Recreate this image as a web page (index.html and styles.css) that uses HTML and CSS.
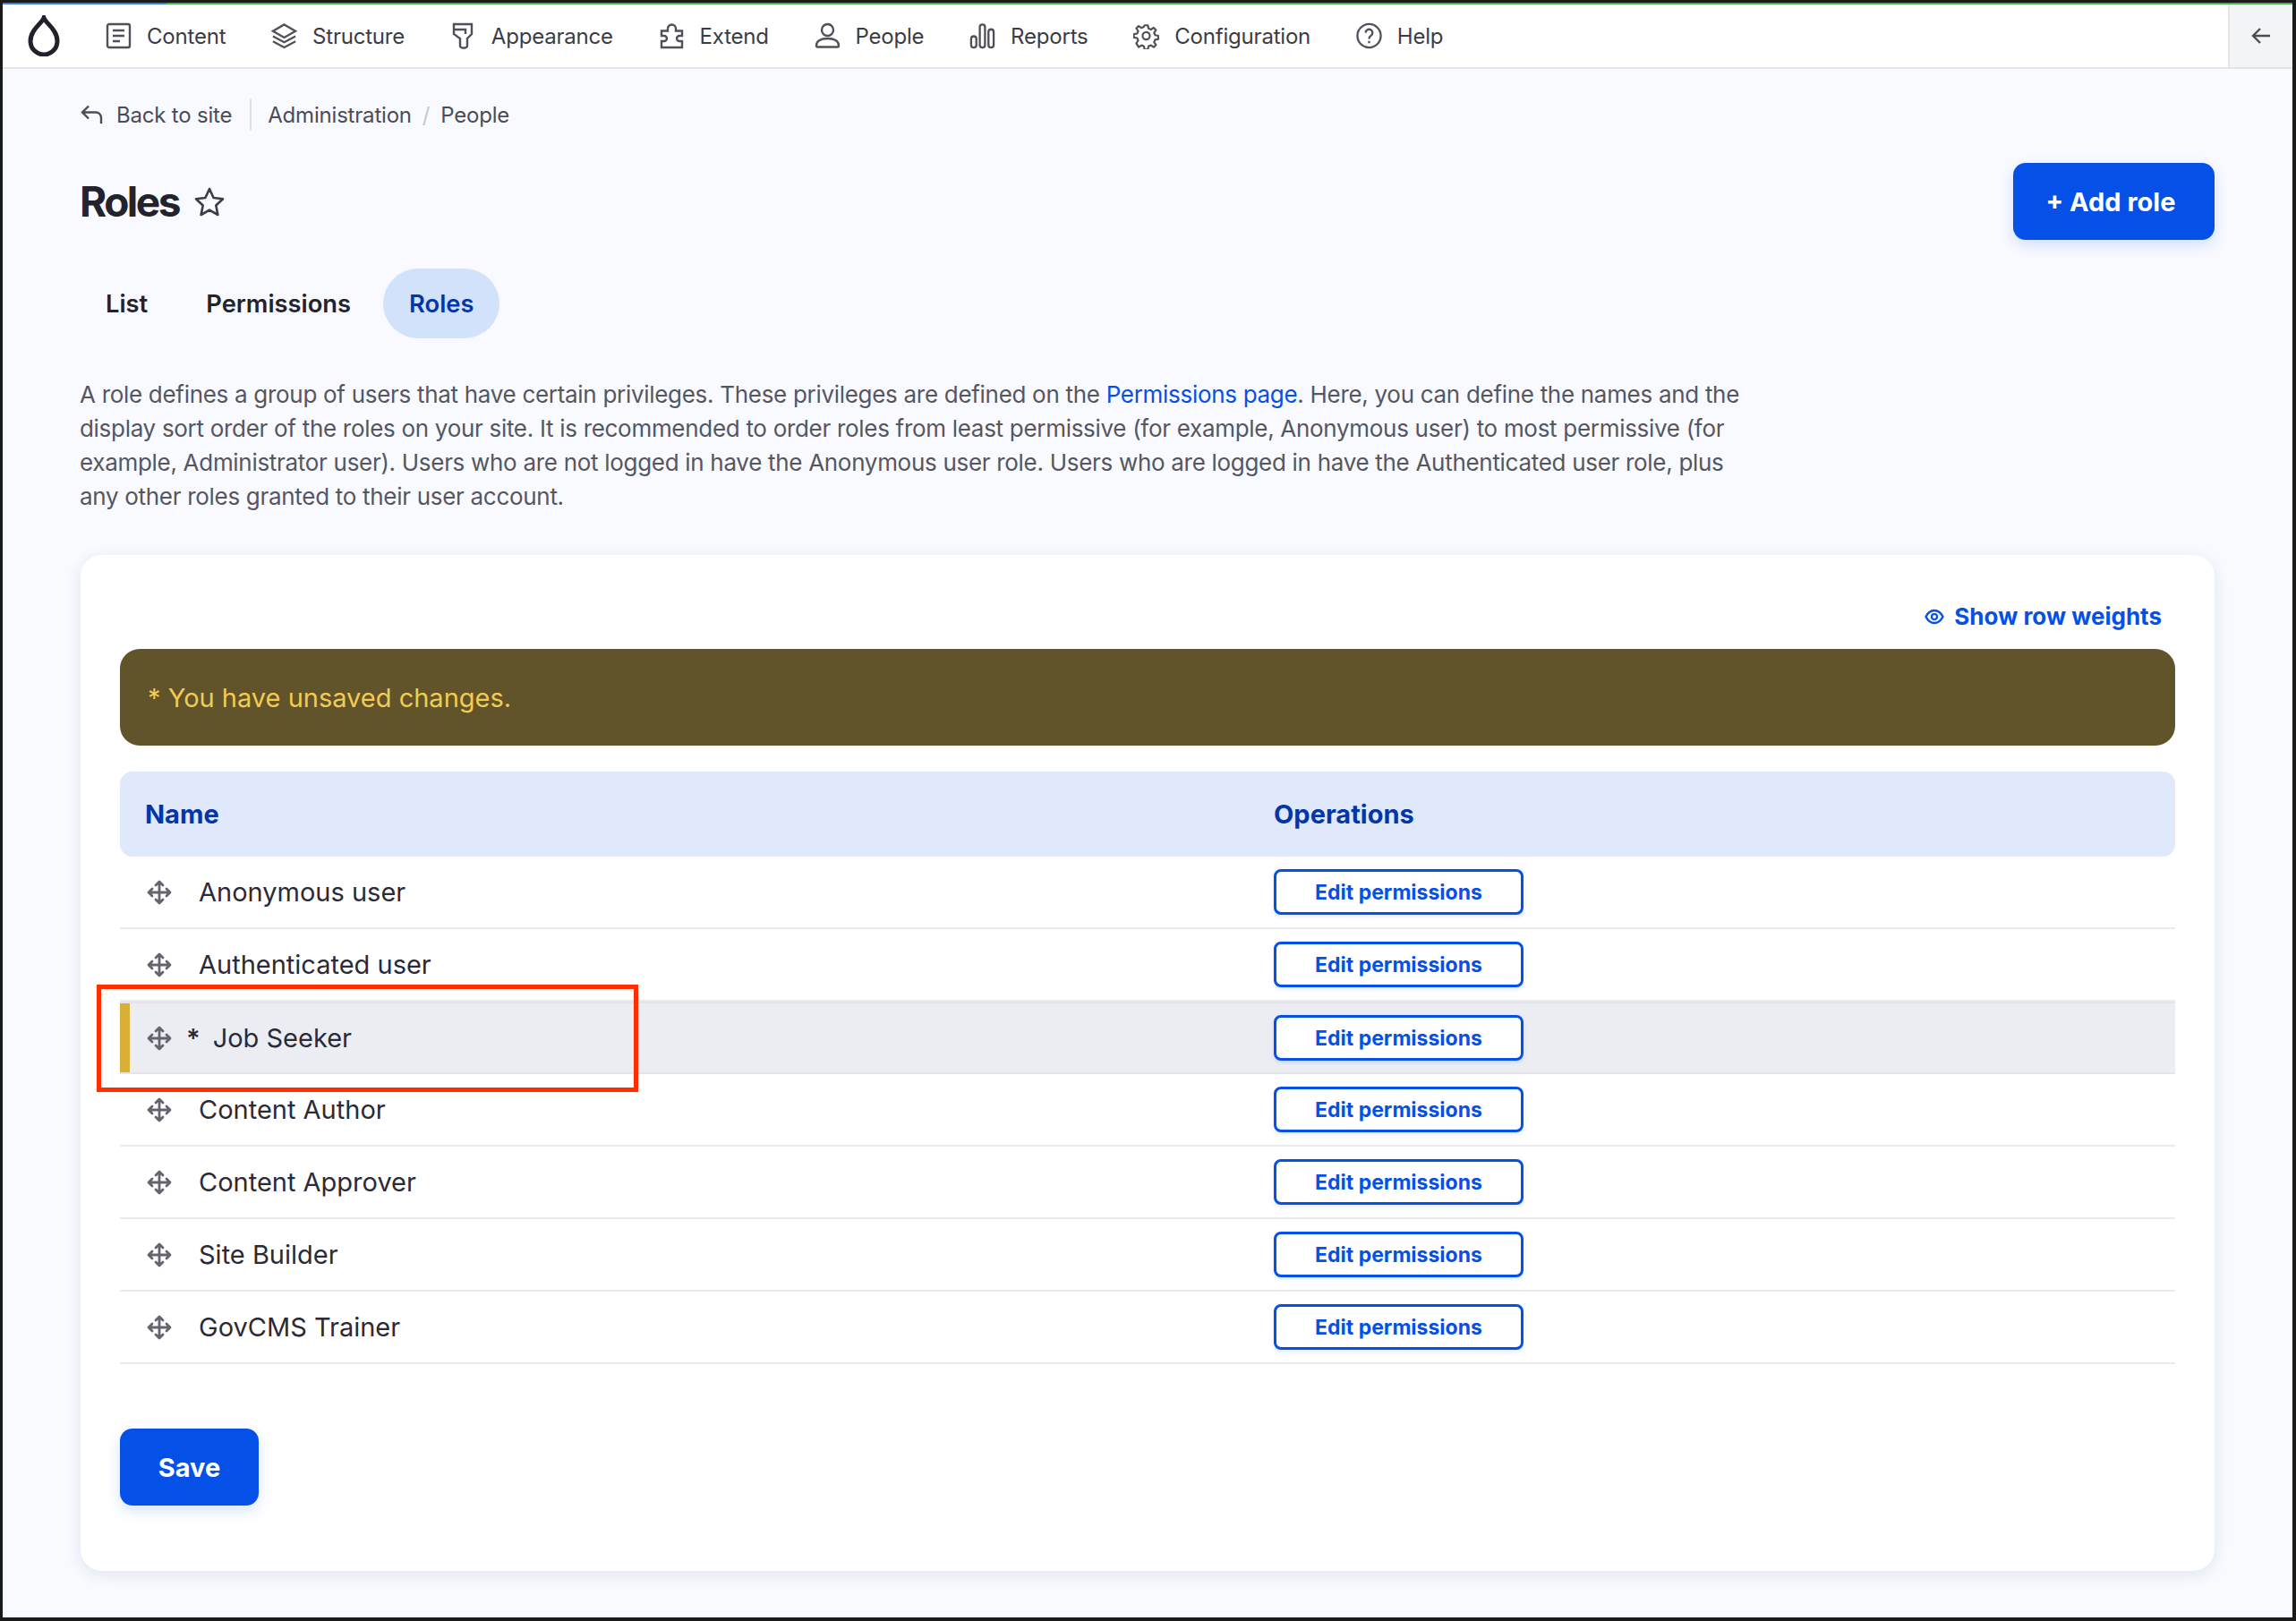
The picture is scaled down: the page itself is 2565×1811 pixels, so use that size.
FILE: index.html
```html
<!DOCTYPE html>
<html lang="en">
<head>
    <meta charset="UTF-8">
    <title>Roles</title>
    <link rel="stylesheet" href="styles.css">
</head>
<body>
    <svg class="sprite" width="0" height="0">
        <symbol id="drag" viewBox="0 0 28 28">
            <path d="M14 3v22M3 14h22M10 6l4-4 4 4M10 22l4 4 4-4M6 10l-4 4 4 4M22 10l4 4-4 4" fill="none" stroke="#63646e" stroke-width="2.800" stroke-linecap="round" stroke-linejoin="round"/>
        </symbol>
    </svg>

    <div class="window">
        <nav class="toolbar">
            <a class="logo" href="#">
                <svg width="36" height="46" viewBox="0 0 36 46"><path d="M18 3c2 6 15 13 15 26a15 15 0 0 1-30 0C3 16 16 9 18 3z" fill="none" stroke="#20212b" stroke-width="5"/></svg>
            </a>
            <ul class="toolbar-menu">
                <li><svg viewBox="0 0 29 29"><rect x="2" y="1.500" width="25" height="26" rx="2"/><path d="M8 8.500h13M8 14.500h13M8 20.500h8"/></svg>Content</li>
                <li><svg viewBox="0 0 30 30"><path d="M15 2 28 9.500 15 17 2 9.500zM2 15.500l13 7 13-7M2 21.500l13 7 13-7"/></svg>Structure</li>
                <li><svg viewBox="0 0 29 30"><path d="M4 2h20v11l-5 5v8a2.500 2.500 0 0 1-2.500 2.500h-3A2.500 2.500 0 0 1 11 26v-8l-7-5zM4 8h13v5"/></svg>Appearance</li>
                <li><svg viewBox="0 0 29 29"><path d="M10 9V6.500a4.500 4.500 0 0 1 9 0V9h7v5.500h-3a3 3 0 0 0 0 6h3v7H3v-7h3a3 3 0 0 0 0-6H3V9z"/></svg>Extend</li>
                <li><svg viewBox="0 0 29 29"><circle cx="14.500" cy="8" r="6.500"/><path d="M2 25.500c0-5 5-8 12.500-8s12.500 3 12.500 8a1.500 1.500 0 0 1-1.500 1.500h-22A1.500 1.500 0 0 1 2 25.500z"/></svg>People</li>
                <li><svg viewBox="0 0 30 29"><rect x="2" y="15" width="6" height="13" rx="3"/><rect x="12" y="1.500" width="6" height="26.500" rx="3"/><rect x="22" y="7" width="6" height="21" rx="3"/></svg>Reports</li>
                <li><svg viewBox="-1 -1 32 32"><circle cx="15" cy="15" r="4.500"/><path class="gear" d="M13 2h4l.8 4 3 1.300 3.400-2.300 2.800 2.800-2.300 3.400 1.300 3 4 .8v4l-4 .8-1.300 3 2.300 3.400-2.800 2.800-3.400-2.300-3 1.300-.8 4h-4l-.8-4-3-1.300-3.400 2.300L2.800 24.200l2.300-3.400-1.300-3-4-.8v-4l4-.8 1.300-3L2.800 5.800 5.600 3l3.400 2.300 3-1.300z"/></svg>Configuration</li>
                <li><svg viewBox="0 0 30 30"><circle cx="15" cy="15" r="13.500"/><path d="M11 11.500a4 4 0 1 1 6 3.500c-1.500.9-2 1.700-2 3.500M15 21v2.500"/></svg>Help</li>
            </ul>
            <button class="toolbar-toggle" type="button">
                <svg width="22" height="20" viewBox="0 0 22 20"><path d="M21 10H2M10 2l-8 8 8 8" fill="none" stroke="#4b4c55" stroke-width="2.400"/></svg>
            </button>
        </nav>

        <main class="page">
            <div class="breadcrumb">
                <a class="back-link" href="#">
                    <svg width="25" height="22" viewBox="0 0 25 22"><path d="M9 1.500 2 8.500l7 7M2 8.500h15a6 6 0 0 1 6 6V21" fill="none" stroke="#4b4c55" stroke-width="2.400"/></svg>
                    Back to site
                </a>
                <span class="crumb">Administration</span>
                <span class="crumb-sep">/</span>
                <span class="crumb">People</span>
            </div>

            <header class="page-head">
                <div class="title">
                    <h1>Roles</h1>
                    <svg width="34" height="33" viewBox="0 0 34 33"><path d="m17 2 4.600 10 10.400 1.200-7.700 7.300 2.100 10.500L17 25.600 7.600 31l2.100-10.500L2 13.200 12.400 12z" fill="none" stroke="#3c3d47" stroke-width="2.600" stroke-linejoin="round"/></svg>
                </div>
                <a class="btn btn-primary btn-add" href="#">+ Add role</a>
            </header>

            <ul class="tabs">
                <li>List</li>
                <li>Permissions</li>
                <li class="active">Roles</li>
            </ul>

            <p class="intro">A role defines a group of users that have certain privileges. These privileges are defined on the <a href="#">Permissions page</a>. Here, you can define the names and the display sort order of the roles on your site. It is recommended to order roles from least permissive (for example, Anonymous user) to most permissive (for example, Administrator user). Users who are not logged in have the Anonymous user role. Users who are logged in have the Authenticated user role, plus any other roles granted to their user account.</p>

            <section class="card">
                <div class="weights">
                    <a href="#">
                        <svg width="22" height="20" viewBox="0 0 22 20"><path d="M1.500 10C4 5 7 3 11 3s7 2 9.500 7C18 15 15 17 11 17s-7-2-9.500-7z" fill="none" stroke="#0550e6" stroke-width="2.400"/><circle cx="11" cy="10" r="3" fill="none" stroke="#0550e6" stroke-width="2.200"/></svg>
                        Show row weights
                    </a>
                </div>

                <div class="warning">* You have unsaved changes.</div>

                <table class="roles">
                    <thead>
                        <tr><th class="col-name">Name</th><th>Operations</th></tr>
                    </thead>
                    <tbody>
                        <tr>
                            <td><div class="role"><svg class="handle"><use href="#drag"/></svg>Anonymous user</div></td>
                            <td><a class="btn-edit" href="#">Edit permissions</a></td>
                        </tr>
                        <tr>
                            <td><div class="role"><svg class="handle"><use href="#drag"/></svg>Authenticated user</div></td>
                            <td><a class="btn-edit" href="#">Edit permissions</a></td>
                        </tr>
                        <tr class="changed">
                            <td>
                                <div class="role"><svg class="handle"><use href="#drag"/></svg><span class="star">*</span>Job Seeker</div>
                                <div class="highlight"></div>
                            </td>
                            <td><a class="btn-edit" href="#">Edit permissions</a></td>
                        </tr>
                        <tr>
                            <td><div class="role"><svg class="handle"><use href="#drag"/></svg>Content Author</div></td>
                            <td><a class="btn-edit" href="#">Edit permissions</a></td>
                        </tr>
                        <tr>
                            <td><div class="role"><svg class="handle"><use href="#drag"/></svg>Content Approver</div></td>
                            <td><a class="btn-edit" href="#">Edit permissions</a></td>
                        </tr>
                        <tr>
                            <td><div class="role"><svg class="handle"><use href="#drag"/></svg>Site Builder</div></td>
                            <td><a class="btn-edit" href="#">Edit permissions</a></td>
                        </tr>
                        <tr>
                            <td><div class="role"><svg class="handle"><use href="#drag"/></svg>GovCMS Trainer</div></td>
                            <td><a class="btn-edit" href="#">Edit permissions</a></td>
                        </tr>
                    </tbody>
                </table>

                <a class="btn btn-primary btn-save" href="#">Save</a>
            </section>
        </main>
    </div>
</body>
</html>
```

FILE: styles.css
```css
* {
    box-sizing: border-box;
}

html, body {
    height: 100%;
}

body {
    margin: 0;
    padding: 3px 4px 4px 3px;
    background: #1a1a1a;
    font-family: 'Inter', 'Liberation Sans', sans-serif;
    color: #22232d;
}

a {
    text-decoration: none;
    color: inherit;
}

.sprite {
    position: absolute;
}

.window {
    height: 100%;
    background: #f8faff;
    border-top: 2px solid;
    border-image: linear-gradient(to right, #3f7de0 184px, #4caf50 184px) 1;
    overflow: hidden;
}

/* Toolbar */
.toolbar {
    display: flex;
    align-items: center;
    height: 72px;
    background: #fff;
    border-bottom: 2px solid #e3e4e8;
}

.logo {
    display: flex;
    margin-left: 28px;
    margin-right: 51px;
}

.toolbar-menu {
    display: flex;
    flex: 1;
    align-items: center;
    gap: 50.700px;
    list-style: none;
    margin: 0;
    padding: 0;
    font-size: 24px;
    letter-spacing: -0.2px;
    color: #3b3c46;
}

.toolbar-menu li {
    display: flex;
    align-items: center;
    gap: 17px;
}

.toolbar-menu svg {
    width: 29px;
    height: 30px;
    fill: none;
    stroke: #4f5059;
    stroke-width: 2.400;
}

.toolbar-menu .gear {
    stroke-linejoin: round;
}

.toolbar-toggle {
    display: flex;
    align-items: center;
    justify-content: center;
    width: 72px;
    height: 100%;
    padding: 0;
    background: #f3f4f5;
    border: none;
    border-left: 2px solid #e3e4e8;
}

/* Page */
.page {
    padding: 0 87px;
}

.breadcrumb {
    display: flex;
    align-items: center;
    height: 36px;
    margin-top: 33px;
    font-size: 24px;
    letter-spacing: -0.2px;
    color: #4b4c55;
}

.back-link {
    display: flex;
    align-items: center;
    gap: 15px;
    height: 100%;
    padding-right: 20px;
    margin-right: 18px;
    border-right: 2px solid #dfe0e4;
}

.crumb-sep {
    margin: 0 12px;
    color: #c6c7cd;
}

.page-head {
    display: flex;
    align-items: center;
    justify-content: space-between;
    margin-top: 36px;
}

.title {
    display: flex;
    align-items: center;
    gap: 17px;
    margin-left: -1px;
}

h1 {
    margin: 0;
    font-size: 46px;
    font-weight: 700;
    letter-spacing: -2.500px;
    color: #22232d;
}

.btn {
    display: flex;
    align-items: center;
    justify-content: center;
    border-radius: 14px;
    font-weight: 700;
}

.btn-primary {
    width: 225px;
    height: 86px;
    background: #0550e6;
    color: #fff;
    font-size: 29px;
    box-shadow: 0 6px 16px rgba(5, 80, 230, 0.16);
}

.btn-add {
    padding-right: 7px;
}

.tabs {
    display: flex;
    gap: 7px;
    list-style: none;
    margin: 32px 0 0 -1px;
    padding: 0;
    font-size: 27.300px;
    font-weight: 600;
    color: #22232d;
}

.tabs li {
    display: flex;
    align-items: center;
    height: 78px;
    padding: 0 29px;
    border-radius: 39px;
}

.tabs .active {
    background: #d3e2fb;
    color: #0336a8;
}

.intro {
    width: 1870px;
    margin: 44px 0 0 -1px;
    font-size: 26px;
    line-height: 38px;
    letter-spacing: -0.3px;
    color: #55565f;
}

.intro a {
    color: #0550e6;
}

/* Card */
.card {
    margin-top: 46px;
    height: 1135px;
    padding: 0 44px;
    background: #fff;
    border-radius: 24px;
    box-shadow: 0 4px 18px rgba(34, 35, 90, 0.1);
}

.weights {
    display: flex;
    align-items: center;
    justify-content: flex-end;
    height: 105px;
    padding: 32px 15px 0 0;
    font-size: 26px;
    font-weight: 700;
    color: #0550e6;
}

.weights a {
    display: flex;
    align-items: center;
    gap: 11px;
}

.warning {
    display: flex;
    align-items: center;
    height: 108px;
    padding-left: 31px;
    background: #61532a;
    border-radius: 22px;
    font-size: 29px;
    color: #f2cb53;
}

.roles {
    width: 100%;
    margin-top: 29px;
    border-collapse: separate;
    border-spacing: 0;
}

.roles th {
    height: 95px;
    padding: 0;
    background: #e0e8fb;
    font-size: 29px;
    font-weight: 700;
    text-align: left;
    color: #0336a8;
}

.roles th:first-child {
    border-radius: 14px 0 0 14px;
}

.roles th:last-child {
    border-radius: 0 14px 14px 0;
}

.col-name {
    width: 1289px;
}

.roles th.col-name {
    padding-left: 28px;
}

.roles td {
    position: relative;
    height: 81px;
    padding: 0;
    border-bottom: 2px solid #e9eaee;
}

.changed td {
    background: #ecedf3;
    border-top: 2px solid #e3e4e8;
    border-bottom-color: #e3e4e8;
}

.changed td:first-child {
    box-shadow: inset 11px 0 0 #d9b034;
}

.role {
    display: flex;
    align-items: center;
    padding-left: 30px;
    font-size: 29px;
    color: #2a2b36;
}

.handle {
    width: 28px;
    height: 28px;
    margin-right: 30px;
}

.changed .handle {
    margin-right: 16px;
}

.star {
    margin-right: 14px;
    font-weight: 600;
}

.highlight {
    position: absolute;
    left: -26px;
    top: -21px;
    width: 605px;
    height: 120px;
    border: 5px solid #ff2d00;
}

.btn-edit {
    display: flex;
    align-items: center;
    justify-content: center;
    width: 279px;
    height: 51px;
    background: #fff;
    border: 3px solid #0550e6;
    border-radius: 8px;
    font-size: 23px;
    font-weight: 700;
    color: #0550e6;
    box-shadow: 0 2px 4px rgba(5, 80, 230, 0.14);
}

.btn-save {
    width: 155px;
    margin-top: 72px;
}
```
